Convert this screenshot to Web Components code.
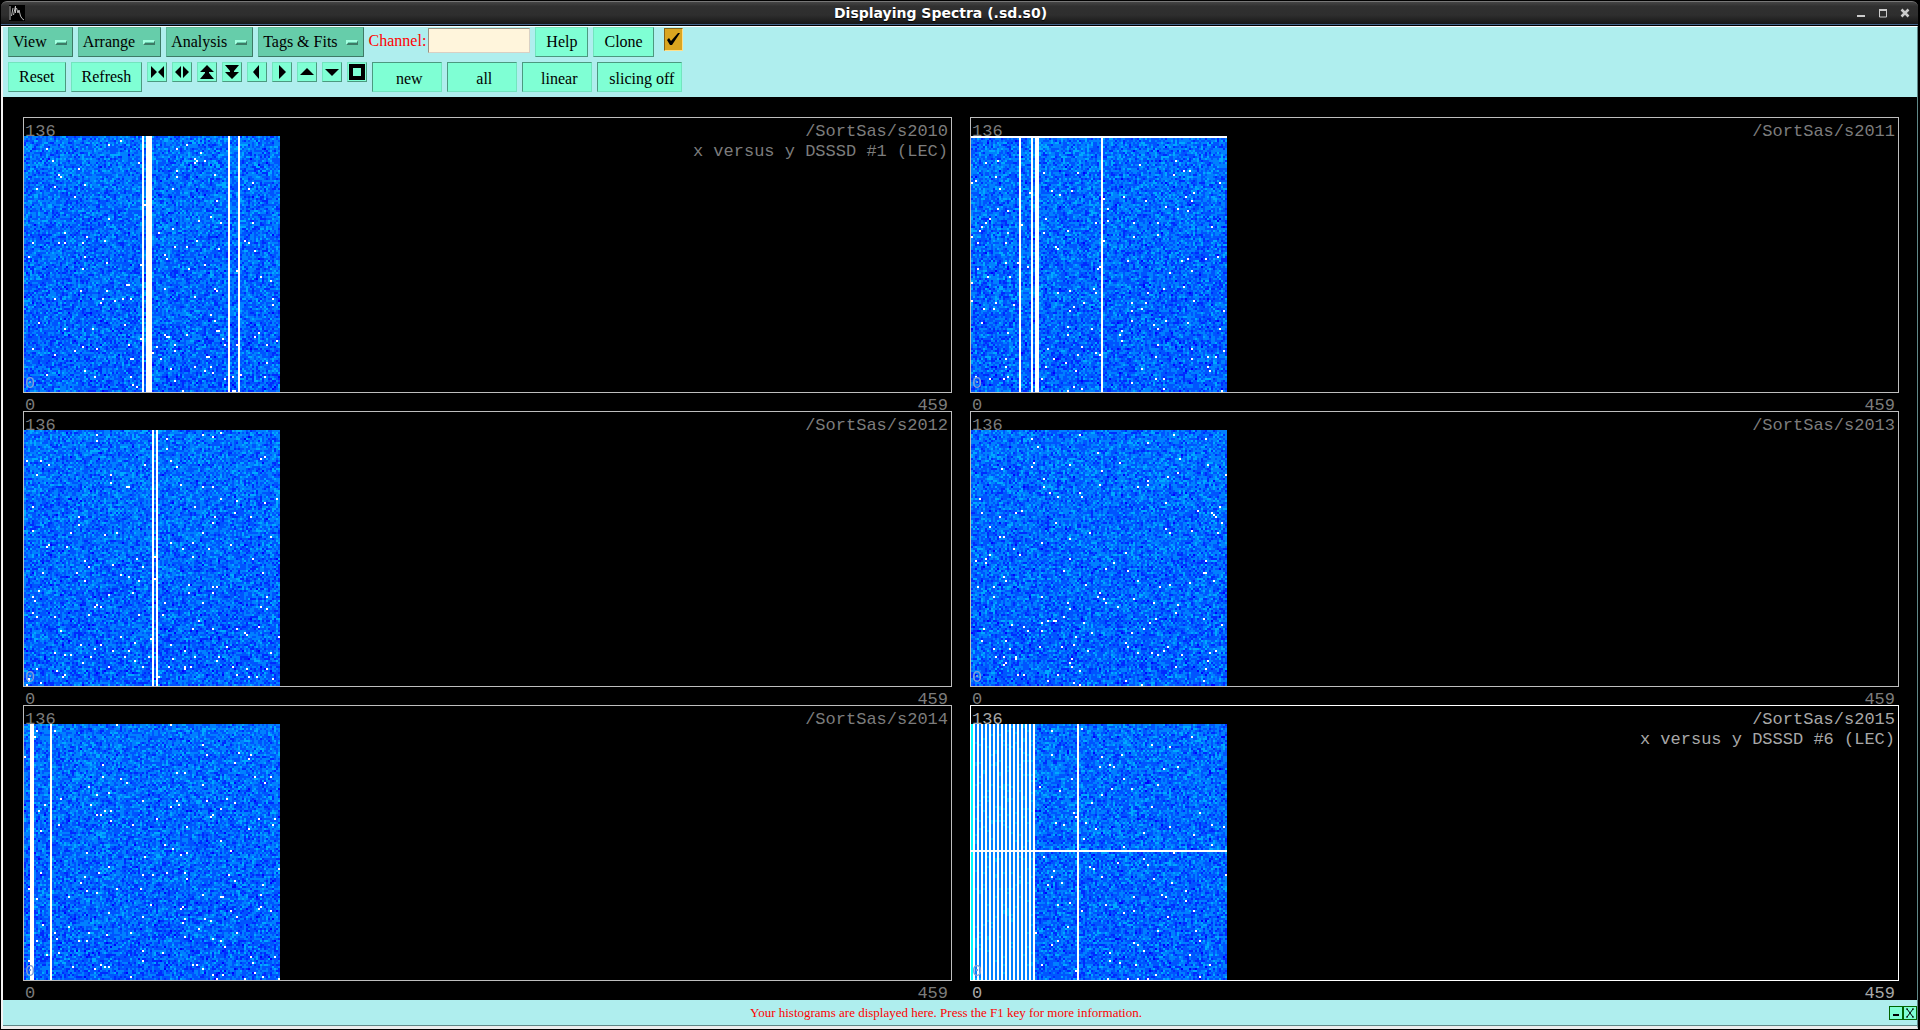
<!DOCTYPE html>
<html lang="en">
<head>
<meta charset="utf-8">
<title>Displaying Spectra (.sd.s0)</title>
<style>
  body{margin:0;background:#000;font:16px "Liberation Serif",serif;color:#000}
</style>
</head>
<body>
<sd-window caption="Displaying Spectra (.sd.s0)">
  <sd-toolbar>
    <sd-menu>View</sd-menu>
    <sd-menu>Arrange</sd-menu>
    <sd-menu>Analysis</sd-menu>
    <sd-menu>Tags &amp; Fits</sd-menu>
    <sd-field label="Channel:"></sd-field>
    <sd-button>Help</sd-button>
    <sd-button>Clone</sd-button>
    <sd-check label="Keep settings"></sd-check>
  </sd-toolbar>
  <sd-toolbar>
    <sd-button>Reset</sd-button>
    <sd-button>Refresh</sd-button>
    <sd-icon name="compress"></sd-icon>
    <sd-icon name="expand"></sd-icon>
    <sd-icon name="raise"></sd-icon>
    <sd-icon name="lower"></sd-icon>
    <sd-icon name="left"></sd-icon>
    <sd-icon name="right"></sd-icon>
    <sd-icon name="up"></sd-icon>
    <sd-icon name="down"></sd-icon>
    <sd-icon name="full"></sd-icon>
    <sd-toggle>new</sd-toggle>
    <sd-toggle>all</sd-toggle>
    <sd-toggle>linear</sd-toggle>
    <sd-toggle>slicing off</sd-toggle>
  </sd-toolbar>
  <sd-grid slot="plots">
    <sd-histogram name="/SortSas/s2010" cols="59,61,62,63,102,107" seed="11">x versus y DSSSD #1 (LEC)</sd-histogram>
    <sd-histogram name="/SortSas/s2011" cols="24,30,32,33,65" rows="0" seed="23"></sd-histogram>
    <sd-histogram name="/SortSas/s2012" cols="64,66" seed="37"></sd-histogram>
    <sd-histogram name="/SortSas/s2013" seed="41"></sd-histogram>
    <sd-histogram name="/SortSas/s2014" cols="3,4,13" seed="59"></sd-histogram>
    <sd-histogram name="/SortSas/s2015" cols="1,3,5,7,9,11,13,15,17,19,21,23,25,27,29,31,53" rows="63" edge seed="67" selected>x versus y DSSSD #6 (LEC)</sd-histogram>
  </sd-grid>
  <sd-status slot="status">Your histograms are displayed here. Press the F1 key for more information.</sd-status>
</sd-window>

<script>
const BEVEL = `
  button{box-sizing:border-box;margin:0;font:inherit;color:inherit;background:#7fffd4;
    border:1px solid;border-color:#72e5be #4c997f #4c997f #72e5be;cursor:pointer}
  button:active{border-color:#4c997f #72e5be #72e5be #4c997f}
`;

class SdWindow extends HTMLElement {
  constructor() {
    super();
    this.attachShadow({ mode: "open" });
  }
  connectedCallback() {
    this.shadowRoot.innerHTML = `
      <style>
        :host{display:flex;flex-direction:column;height:100vh;box-sizing:border-box;padding:1px 2px 1px 1px;background:#000}
        header{display:flex;align-items:center;box-sizing:border-box;height:24px;padding:0 8px;flex:none;
          border-top:1px solid #777;border-bottom:1px solid #45648a;border-radius:6px 6px 0 0;
          background:linear-gradient(#454545,#303030 20%,#2e2e2e 60%,#181818)}
        h1{flex:1;margin:0;text-align:center;color:#fff;font:bold 14px/22px "DejaVu Sans",sans-serif;text-shadow:0 1px 1px #000}
        nav{display:flex;gap:12px}
        nav button{width:10px;height:10px;padding:0;border:0;background:none;display:block}
        svg{display:block}
        .frame{flex:1;min-height:0;display:flex;flex-direction:column;margin-top:1px;
          border-top:1px solid #fff;border-left:2px solid #f4f4f4;border-right:1px solid #5f8787;border-bottom:3px solid #ececec}
        .tools{background:#afeeee;padding:0 5px 5px;display:flex;flex-direction:column;gap:5px}
        .plots{flex:1;min-height:0;display:flex}
      </style>
      <header>
        <svg width="16" height="16" viewBox="0 0 16 16"><rect width="16" height="16" fill="#000"/>
          <path d="M1 1V15M2.5 11L4 3M4.5 10L6.500 1V8M7.500 3L9 8L10 5L11.500 11L13 13.500L15 15" stroke="#bbb" fill="none"/></svg>
        <h1></h1>
        <nav>
          <button aria-label="Minimize"><svg width="10" height="10"><path d="M1 8H9" stroke="#ccc" stroke-width="2"/></svg></button>
          <button aria-label="Maximize"><svg width="10" height="10"><path d="M1.5 2V9H8.500V2M1 2H9" stroke="#ccc" fill="none"/><path d="M1 2H9" stroke="#ccc" stroke-width="2"/></svg></button>
          <button aria-label="Close"><svg width="10" height="10"><path d="M1.500 1.500L8.500 8.500M8.500 1.500L1.500 8.500" stroke="#ccc" stroke-width="2.500"/></svg></button>
        </nav>
      </header>
      <div class="frame">
        <div class="tools"><slot></slot></div>
        <div class="plots"><slot name="plots"></slot></div>
        <slot name="status"></slot>
      </div>
    `;
    this.shadowRoot.querySelector("h1").textContent = this.getAttribute("caption");
  }
}
customElements.define("sd-window", SdWindow);

class SdToolbar extends HTMLElement {
  constructor() {
    super();
    this.attachShadow({ mode: "open" }).innerHTML = `
      <style>:host{display:flex;gap:5px;align-items:flex-start}</style>
      <slot></slot>
    `;
  }
}
customElements.define("sd-toolbar", SdToolbar);

class SdMenu extends HTMLElement {
  constructor() {
    super();
    this.attachShadow({ mode: "open" }).innerHTML = `
      <style>
        ${BEVEL}
        :host{display:block}
        button{display:flex;align-items:center;gap:8px;height:30px;padding:0 5px 0 4px;background:#66cdaa;
          border-color:#5cb899 #3d7b66 #3d7b66 #5cb899}
        i{box-sizing:border-box;width:12px;height:5px;border:solid;border-width:2px 1px 2px 2px;
          border-color:#a3ffe0 #3d7b66 #3d7b66 #a3ffe0}
      </style>
      <button aria-haspopup="menu"><slot></slot><i></i></button>
    `;
  }
}
customElements.define("sd-menu", SdMenu);

class SdButton extends HTMLElement {
  constructor() {
    super();
    this.attachShadow({ mode: "open" }).innerHTML = `
      <style>
        ${BEVEL}
        :host{display:block}
        button{height:30px;padding:0 10px;display:block}
      </style>
      <button><slot></slot></button>
    `;
  }
}
customElements.define("sd-button", SdButton);

class SdToggle extends HTMLElement {
  constructor() {
    super();
    this.attachShadow({ mode: "open" }).innerHTML = `
      <style>
        ${BEVEL}
        :host{display:block}
        button{height:30px;min-width:70px;padding:3px 7px 0 11px;display:block;border-color:#4c997f #72e5be #72e5be #4c997f}
      </style>
      <button aria-pressed="true"><slot></slot></button>
    `;
    const button = this.shadowRoot.querySelector("button");
    button.addEventListener("click", () => {
      button.setAttribute("aria-pressed", button.getAttribute("aria-pressed") !== "true");
    });
  }
}
customElements.define("sd-toggle", SdToggle);

const ICONS = {
  compress: ["Compress", "M3 3L9 9L3 15ZM16 3L10 9L16 15Z"],
  expand: ["Expand", "M8 3V15L2 9ZM10 3L16 9L10 15Z"],
  raise: ["Raise scale", "M9 2L16 9H11V10L16 16H2L7 10V9H2Z"],
  lower: ["Lower scale", "M2 2H16L11 8V9H16L9 16L2 9H7V8Z"],
  left: ["Move left", "M11 2V16L5 9Z"],
  right: ["Move right", "M6 2L13 9L6 16Z"],
  up: ["Move up", "M9 5L16 12H2Z"],
  down: ["Move down", "M2 6H16L9 13Z"],
  full: ["Full view", "M1 1H17V17H1ZM5 5V13H13V5Z"],
};

class SdIcon extends HTMLElement {
  constructor() {
    super();
    this.attachShadow({ mode: "open" });
  }
  connectedCallback() {
    const [label, d] = ICONS[this.getAttribute("name")];
    this.shadowRoot.innerHTML = `
      <style>
        ${BEVEL}
        :host{display:block}
        button{width:20px;height:20px;padding:0;display:block}
        svg{display:block}
      </style>
      <button aria-label="${label}"><svg width="18" height="18"><path d="${d}" fill-rule="evenodd"/></svg></button>
    `;
  }
}
customElements.define("sd-icon", SdIcon);

class SdField extends HTMLElement {
  constructor() {
    super();
    this.attachShadow({ mode: "open" });
  }
  connectedCallback() {
    this.shadowRoot.innerHTML = `
      <style>
        :host{display:flex;align-items:center;gap:2px;padding-top:1px}
        label{color:#f00}
        input{box-sizing:border-box;width:102px;height:25px;margin:0;padding:0 4px;font:inherit;background:#fff5dc;
          border:1px solid;border-color:#999384 #d9d0c4 #d9d0c4 #999384;outline:0}
      </style>
      <label for="f">${this.getAttribute("label")}</label><input id="f" type="text">
    `;
  }
}
customElements.define("sd-field", SdField);

class SdCheck extends HTMLElement {
  constructor() {
    super();
    this.attachShadow({ mode: "open" });
  }
  connectedCallback() {
    this.shadowRoot.innerHTML = `
      <style>
        :host{display:grid;padding:1px 0 0 5px}
        input,svg{grid-area:1/1}
        input{appearance:none;box-sizing:border-box;width:19px;height:23px;margin:0;background:#daa520;
          border:1px solid;border-color:#83631a #ffe08a #ffe08a #83631a}
        svg{pointer-events:none}
        input:not(:checked) + svg{visibility:hidden}
      </style>
      <input type="checkbox" checked aria-label="${this.getAttribute("label")}">
      <svg width="19" height="23"><path d="M3 12L5 10L7 13L14 5H16L8 17H6Z"/></svg>
    `;
  }
}
customElements.define("sd-check", SdCheck);

class SdGrid extends HTMLElement {
  constructor() {
    super();
    this.attachShadow({ mode: "open" }).innerHTML = `
      <style>
        :host{flex:1;display:grid;grid-template-columns:1fr 1fr;grid-auto-rows:1fr;column-gap:18px;
          padding:20px 18px 1px 20px;background:#000}
      </style>
      <slot></slot>
    `;
  }
}
customElements.define("sd-grid", SdGrid);

// counts run from low (deep blue) to high (light blue)
const PALETTE = [[0, 0, 255], [0, 43, 255], [0, 85, 255], [0, 128, 255], [0, 170, 255], [0, 255, 255], [255, 255, 255]];
const BINS = 128;

function rng(seed) {
  let a = seed * 2654435761;
  return () => {
    a = (a + 0x6d2b79f5) | 0;
    let t = Math.imul(a ^ (a >>> 15), 1 | a);
    t = (t + Math.imul(t ^ (t >>> 7), 61 | t)) ^ t;
    return ((t ^ (t >>> 14)) >>> 0) / 4294967296;
  };
}

class SdHistogram extends HTMLElement {
  constructor() {
    super();
    this.attachShadow({ mode: "open" });
  }
  connectedCallback() {
    this.shadowRoot.innerHTML = `
      <style>
        :host{display:flex;flex-direction:column;min-height:0;font:17px/20px "Liberation Mono",monospace;color:#7c7c7c}
        :host([selected]){color:#a8a8a8}
        .plot{flex:1;min-height:0;display:grid;position:relative;border:1px solid #bebebe}
        :host([selected]) .plot{border-color:#fff}
        canvas{grid-area:1/1;place-self:end start;width:256px;height:256px;image-rendering:pixelated}
        .head{grid-area:1/1;display:flex;justify-content:space-between;padding:4px 3px 0 1px}
        .name{text-align:right}
        .zero{position:absolute;left:1px;bottom:0;line-height:16px;color:#7f9fd8}
        .axis{display:flex;justify-content:space-between;height:15px;padding:3px 4px 0 2px}
      </style>
      <div class="plot">
        <div class="head"><span>136</span><div class="name">${this.getAttribute("name")}<br><slot></slot></div></div>
        <canvas width="${BINS}" height="${BINS}"></canvas>
        <span class="zero">0</span>
      </div>
      <div class="axis"><span>0</span><span>459</span></div>
    `;
    this.draw();
  }
  list(attr) {
    return new Set((this.getAttribute(attr) || "").split(",").filter(Boolean).map(Number));
  }
  draw() {
    const ctx = this.shadowRoot.querySelector("canvas").getContext("2d");
    const img = ctx.createImageData(BINS, BINS);
    const rand = rng(Number(this.getAttribute("seed")));
    const cols = this.list("cols");
    const rows = this.list("rows");
    const edge = this.hasAttribute("edge");
    for (let y = 0; y < BINS; y++) {
      for (let x = 0; x < BINS; x++) {
        const noise = (rand() + rand() + rand() - 1.5) * 1.7;
        const spike = rand() < 0.005 + 0.007 * y / BINS;
        let v = Math.round(2.4 + noise - 0.4 * (y / BINS - 0.5));
        v = Math.max(0, Math.min(4, v));
        if (edge && x < 32) v = Math.max(3, v);
        if (edge && x === 0) v = 5;
        if (cols.has(x) || rows.has(y) || (spike && !(edge && x < 32))) v = 6;
        img.data.set([...PALETTE[v], 255], (y * BINS + x) * 4);
      }
    }
    ctx.putImageData(img, 0, 0);
  }
}
customElements.define("sd-histogram", SdHistogram);

class SdStatus extends HTMLElement {
  constructor() {
    super();
    this.attachShadow({ mode: "open" }).innerHTML = `
      <style>
        :host{display:flex;align-items:center;flex:none;height:25px;background:#afeeee;border-bottom:1px solid #5f8787}
        p{flex:1;margin:0;text-align:center;color:#f00;font-size:13px;line-height:25px}
        button{box-sizing:border-box;width:14px;height:14px;padding:0;border:1px solid #006400;background:#7fffd4;display:block}
        svg{display:block}
      </style>
      <p><slot></slot></p>
      <button aria-label="Shrink"><svg width="12" height="12"><path d="M3 8H9" stroke="#000" stroke-width="2"/></svg></button>
      <button aria-label="Close"><svg width="12" height="12"><path d="M2 2H4M8 2H10M3 2L9 10M9 2L3 10M2 10H4M8 10H10" stroke="#000"/></svg></button>
    `;
  }
}
customElements.define("sd-status", SdStatus);
</script>
</body>
</html>
